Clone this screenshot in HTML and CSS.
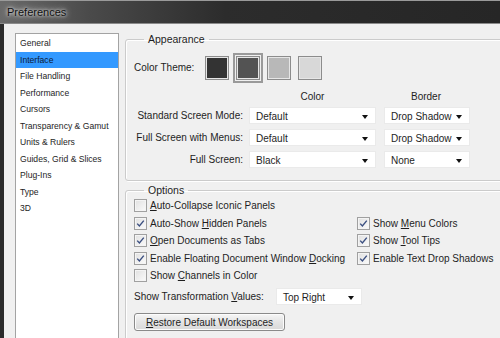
FILE: index.html
```html
<!DOCTYPE html>
<html lang="en">
<head>
    <meta charset="UTF-8">
    <title>Preferences</title>
    <link rel="stylesheet" href="styles.css">
</head>
<body>
<div class="window">

    <!-- Title bar -->
    <div class="titlebar">
        <span class="title">Preferences</span>
    </div>

    <div class="frame">

        <!-- Section list -->
        <ul class="sidebar">
            <li>General</li>
            <li class="selected">Interface</li>
            <li>File Handling</li>
            <li>Performance</li>
            <li>Cursors</li>
            <li>Transparency &amp; Gamut</li>
            <li>Units &amp; Rulers</li>
            <li>Guides, Grid &amp; Slices</li>
            <li>Plug-Ins</li>
            <li>Type</li>
            <li>3D</li>
        </ul>

        <div class="panels">

            <!-- Appearance -->
            <fieldset class="group appearance">
                <legend>Appearance</legend>
                <div class="theme-row">
                    <span class="theme-label">Color Theme:</span>
                    <div class="swatches">
                        <span class="swatch darkest"></span>
                        <span class="swatch dark active"></span>
                        <span class="swatch medium"></span>
                        <span class="swatch light"></span>
                    </div>
                </div>
                <div class="mode-grid">
                    <span></span>
                    <span class="col-head">Color</span>
                    <span class="col-head">Border</span>

                    <span class="row-label">Standard Screen Mode:</span>
                    <div class="select">Default<span class="arrow"></span></div>
                    <div class="select">Drop Shadow<span class="arrow"></span></div>

                    <span class="row-label">Full Screen with Menus:</span>
                    <div class="select">Default<span class="arrow"></span></div>
                    <div class="select">Drop Shadow<span class="arrow"></span></div>

                    <span class="row-label">Full Screen:</span>
                    <div class="select">Black<span class="arrow"></span></div>
                    <div class="select">None<span class="arrow"></span></div>
                </div>
            </fieldset>

            <!-- Options -->
            <fieldset class="group options">
                <legend>Options</legend>
                <div class="checks">
                    <div class="check"><span class="box"></span><span><u>A</u>uto-Collapse Iconic Panels</span></div>
                    <div></div>

                    <div class="check"><span class="box on"></span><span>Auto-Show <u>H</u>idden Panels</span></div>
                    <div class="check"><span class="box on"></span><span>Show <u>M</u>enu Colors</span></div>

                    <div class="check"><span class="box on"></span><span><u>O</u>pen Documents as Tabs</span></div>
                    <div class="check"><span class="box on"></span><span>Show <u>T</u>ool Tips</span></div>

                    <div class="check"><span class="box on"></span><span>Enable Floating Document Window <u>D</u>ocking</span></div>
                    <div class="check"><span class="box on"></span><span>Enable Text Drop Shadows</span></div>

                    <div class="check"><span class="box"></span><span>Show <u>C</u>hannels in Color</span></div>
                    <div></div>
                </div>
                <div class="transform-row">
                    <span>Show Transformation <u>V</u>alues:</span>
                    <div class="select small">Top Right<span class="arrow"></span></div>
                </div>
                <button class="restore"><u>R</u>estore Default Workspaces</button>
            </fieldset>

        </div>
    </div>
</div>

<script>
    // draw the tick inside every checked box
    document.querySelectorAll('.box.on').forEach(box => {
        box.innerHTML = '<svg width="9" height="9" viewBox="0 0 9 9"><path d="M1.2 4.6 L3.4 7 L7.8 1.6" fill="none" stroke="#3b4f80" stroke-width="1.4"/></svg>';
    });
</script>
</body>
</html>
```

FILE: styles.css
```css
body {
    margin: 0;
    padding: 0;
    width: 500px;
    height: 338px;
    overflow: hidden;
    font-family: "Liberation Sans", Arial, sans-serif;
    font-size: 10px;
    color: #1e1e1e;
}

.window {
    height: 338px;
    overflow: hidden;
    background-color: #f0f0f0;
}

.titlebar {
    height: 23px;
    border-bottom: 1px solid #8a8a8a;
    background: linear-gradient(90deg, #6a6a6a 0%, #4a4a4a 18%, #2c2c2c 45%, #262626 100%);
    box-shadow: inset 0 1px 0 #9a9a9a;
    display: flex;
    align-items: center;
}

.title {
    margin-left: 7px;
    font-size: 11px;
    color: #111;
    text-shadow: 0 0 6px #e4e4e4, 0 0 3px #eee;
}

.frame {
    display: flex;
    height: 314px;
    overflow: hidden;
    border-left: 4px solid #2b2b2b;
    background-color: #f0f0f0;
}

/* Section list */
.sidebar {
    list-style: none;
    margin: 9px 0 0 11px;
    padding: 1px 0 0 0;
    width: 102px;
    height: 320px;
    flex-shrink: 0;
    background-color: #fff;
    border: 1px solid #a3a3a3;
    font-size: 8.6px;
}

.sidebar li {
    height: 16.5px;
    line-height: 16.5px;
    padding-left: 4px;
    white-space: nowrap;
}

.sidebar li.selected {
    background-color: #3399ff;
    color: #0d1a33;
}

.panels {
    margin: 9px 0 0 6px;
    flex: 1;
    min-width: 0;
}

/* Group boxes */
.group {
    margin: 0 -20px 0 0;
    padding: 0 0 0 8px;
    border: 1px solid #cbcbcb;
    border-radius: 3px;
    box-shadow: inset 1px 1px 0 #fff, 1px 1px 0 #fff;
}

.group legend {
    margin-left: 10px;
    padding: 0 4px;
    line-height: 12px;
    font-size: 10.5px;
}

.appearance {
    padding-bottom: 12px;
}

.theme-row {
    display: flex;
    align-items: center;
    margin-top: 10px;
    height: 25px;
}

.theme-label {
    width: 71px;
}

.swatches {
    display: flex;
    gap: 7px;
}

.swatch {
    width: 22px;
    height: 22px;
    border: 1px solid #8c8c8c;
    box-shadow: inset 0 0 0 1px #e6e6e6;
}

.swatch.darkest { background-color: #333; }
.swatch.dark { background-color: #535353; }
.swatch.medium { background-color: #b8b8b8; }
.swatch.light { background-color: #d8d8d8; }

.swatch.active {
    outline: 2px solid #9a9a9a;
    outline-offset: 1px;
}

.mode-grid {
    display: grid;
    grid-template-columns: 109px 127px 88px;
    column-gap: 6px;
    row-gap: 5px;
    margin-top: 11px;
    align-items: center;
}

.mode-grid .select + .select {
    margin-left: 2px;
}

.col-head {
    text-align: center;
    line-height: 12px;
    margin-bottom: -1px;
}

.row-label {
    text-align: right;
    white-space: nowrap;
}

/* Dropdowns */
.select {
    position: relative;
    height: 17px;
    line-height: 17px;
    padding-left: 6px;
    background-color: #fff;
    border: 1px solid #eaeaea;
    box-sizing: border-box;
}

.select .arrow {
    position: absolute;
    right: 7px;
    top: 7px;
    border-top: 4px solid #111;
    border-left: 3px solid transparent;
    border-right: 3px solid transparent;
}

.options {
    margin-top: 3px;
    height: 200px;
}

.checks {
    display: grid;
    grid-template-columns: 223px auto;
    grid-auto-rows: 17.5px;
    margin-top: 1px;
}

.check {
    display: flex;
    align-items: center;
    white-space: nowrap;
}

.box {
    width: 11px;
    height: 11px;
    margin-right: 3px;
    border: 1px solid #a0a0a0;
    background: linear-gradient(135deg, #e0e0e0, #fbfbfb);
    box-shadow: inset 0 0 0 1px #f4f4f4;
    display: flex;
    align-items: center;
    justify-content: center;
}

.transform-row {
    display: flex;
    align-items: center;
    gap: 12px;
    margin-top: 3.5px;
}

.select.small {
    width: 86px;
}

.restore {
    margin-top: 8px;
    width: 151px;
    height: 18px;
    padding: 0;
    font-family: inherit;
    font-size: 10px;
    color: #1e1e1e;
    border: 1px solid #8a8a8a;
    border-radius: 3px;
    background: linear-gradient(#f6f6f6, #e4e4e4 50%, #d9d9d9);
    box-shadow: inset 0 0 0 1px #fcfcfc;
}
```
